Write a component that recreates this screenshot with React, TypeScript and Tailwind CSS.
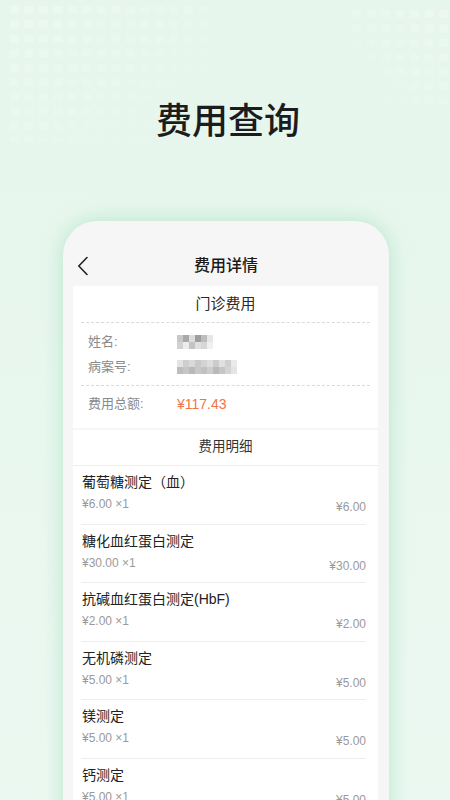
import React from "react";

const items = [
  { name: "葡萄糖测定（血）", unit: "¥6.00 ×1", total: "¥6.00" },
  { name: "糖化血红蛋白测定", unit: "¥30.00 ×1", total: "¥30.00" },
  { name: "抗碱血红蛋白测定(HbF)", unit: "¥2.00 ×1", total: "¥2.00" },
  { name: "无机磷测定", unit: "¥5.00 ×1", total: "¥5.00" },
  { name: "镁测定", unit: "¥5.00 ×1", total: "¥5.00" },
  { name: "钙测定", unit: "¥5.00 ×1", total: "¥5.00" },
];

// blurred personal data, drawn as a small mosaic
const Mosaic = ({ cols, shades }: { cols: number; shades: string[] }) => (
  <div className="flex flex-col">
    {[0, 1].map((r) => (
      <div key={r} className="flex">
        {Array.from({ length: cols }).map((_, c) => (
          <div
            key={c}
            className="w-[6px] h-[7px]"
            style={{ backgroundColor: shades[(r * cols + c) % shades.length] }}
          />
        ))}
      </div>
    ))}
  </div>
);

const Dots = ({ id }: { id: string }) => (
  <svg width="100%" height="100%">
    <defs>
      <pattern id={`p-${id}`} width="14.5" height="14.5" patternUnits="userSpaceOnUse">
        <rect x="2" y="2" width="9" height="8" rx="1" fill="#ffffff" />
      </pattern>
      <linearGradient id={`g-${id}`} x1="0" y1="0" x2="1" y2="1">
        <stop offset="0" stopColor="#fff" stopOpacity="0.28" />
        <stop offset="0.7" stopColor="#fff" stopOpacity="0.08" />
        <stop offset="1" stopColor="#fff" stopOpacity="0" />
      </linearGradient>
      <mask id={`m-${id}`}>
        <rect width="100%" height="100%" fill={`url(#g-${id})`} />
      </mask>
    </defs>
    <rect width="100%" height="100%" fill={`url(#p-${id})`} mask={`url(#m-${id})`} />
  </svg>
);

const App = () => {
  return (
    <div className="relative w-[450px] h-[800px] overflow-hidden bg-gradient-to-b from-[#e6f6ec] to-[#ebf8f1] font-['Liberation_Sans','Noto_Sans_CJK_SC',sans-serif]">
      <div className="absolute left-[8px] top-[4px] w-[200px] h-[138px]">
        <Dots id="a" />
      </div>
      <div className="absolute left-[350px] top-[8px] w-[100px] h-[98px] scale-x-[-1]">
        <Dots id="b" />
      </div>

      <div className="relative">
        <h1 className="pt-[99px] pl-[6px] text-center text-[36px] leading-[46px] font-medium text-[#1c1c1c]">
          费用查询
        </h1>

        <div className="mt-[76px] ml-[63px] w-[326px] h-[600px] rounded-t-[34px] bg-[#f6f6f6] shadow-[0_0_20px_rgba(110,205,150,0.4)]">
          <div className="relative h-[65px] pt-[25px] flex items-center justify-center">
            <svg
              className="absolute left-[14px] top-[35px]"
              width="12"
              height="20"
              viewBox="0 0 12 20"
              fill="none"
              stroke="#222"
              strokeWidth="1.6"
              strokeLinecap="round"
              strokeLinejoin="round"
            >
              <path d="M10 1.5 1.8 10 10 18.5" />
            </svg>
            <span className="text-[16px] leading-[22px] font-medium text-[#1a1a1a]">费用详情</span>
          </div>

          <div className="pl-[10px] pr-[11px]">
            <div className="bg-white">
              <div className="h-[36px] flex items-center justify-center text-[15px] text-[#2a2a2a]">
                门诊费用
              </div>
              <div className="mx-[8px] border-t border-dashed border-[#d9d9d9]" />
              <div className="pl-[15px] pt-[6px] pb-[6px] text-[13px] text-[#8a8a8a]">
                <div className="flex items-center h-[25px]">
                  <span className="w-[89px]">姓名:</span>
                  <Mosaic cols={6} shades={["#c8c8c8", "#a9a9a9", "#dcdcdc", "#9e9e9e", "#bdbdbd", "#e6e6e6", "#d2d2d2", "#ececec", "#c4c4c4", "#e0e0e0", "#d6d6d6", "#f0f0f0"]} />
                </div>
                <div className="flex items-center h-[25px]">
                  <span className="w-[89px]">病案号:</span>
                  <Mosaic cols={10} shades={["#e3e3e3", "#cfcfcf", "#d9d9d9", "#c9c9c9", "#d3d3d3", "#dedede", "#cccccc", "#e1e1e1", "#d0d0d0", "#eaeaea", "#bdbdbd", "#c5c5c5", "#b9b9b9", "#c8c8c8", "#c1c1c1", "#cdcdcd", "#bababa", "#c6c6c6", "#d4d4d4", "#e4e4e4"]} />
                </div>
              </div>
              <div className="mx-[8px] border-t border-dashed border-[#d9d9d9]" />
              <div className="pl-[15px] pt-[6px] pb-[12px] flex items-center h-[42px]">
                <span className="w-[89px] text-[13px] text-[#8a8a8a]">费用总额:</span>
                <span className="text-[14px] text-[#f07447]">¥117.43</span>
              </div>
            </div>

            <div className="mt-[2px] bg-white">
              <div className="h-[36px] flex items-center justify-center text-[13.5px] text-[#333] border-b border-[#ededed]">
                费用明细
              </div>
              <div className="ml-[8px] mr-[12px]">
                {items.map((it) => (
                  <div key={it.name} className="h-[58.6px] pt-[7px] border-b border-[#ededed]">
                    <div className="pl-[1px] text-[14px] leading-[18px] text-[#222]">{it.name}</div>
                    <div className="mt-[5px] flex justify-between items-start text-[12px] leading-[16px] text-[#9a9a9a]">
                      <span className="pl-[1px]">{it.unit}</span>
                      <span className="mt-[3px]">{it.total}</span>
                    </div>
                  </div>
                ))}
              </div>
            </div>
          </div>
        </div>
      </div>
    </div>
  );
};

export default App;
